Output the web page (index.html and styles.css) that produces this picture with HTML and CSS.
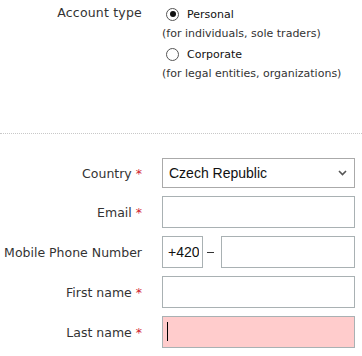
FILE: index.html
```html
<!DOCTYPE html>
<html>
<head>
<meta charset="utf-8">
<link rel="stylesheet" href="styles.css">
</head>
<body>
<div class="page">
  <section class="account">
    <div class="acc-label">Account type</div>
    <div class="options">
      <label class="opt"><input type="radio" name="acc" class="radio" checked><span>Personal</span></label>
      <div class="desc">(for individuals, sole traders)</div>
      <label class="opt"><input type="radio" name="acc" class="radio"><span>Corporate</span></label>
      <div class="desc">(for legal entities, organizations)</div>
    </div>
  </section>
  <div class="divider"></div>
  <form class="fields">
    <label class="flabel">Country <span class="req">*</span></label>
    <div class="select">
      <span class="sel-text">Czech Republic</span>
      <svg class="chev" width="9" height="6" viewBox="0 0 9 6"><path d="M1 1 L4.5 4.5 L8 1" fill="none" stroke="#555" stroke-width="1.6"/></svg>
    </div>

    <label class="flabel">Email <span class="req">*</span></label>
    <input class="inp" type="text">

    <label class="flabel">Mobile Phone Number</label>
    <div class="phone">
      <input class="inp prefix" type="text" value="+420">
      <span class="dash"></span>
      <input class="inp num" type="text">
    </div>

    <label class="flabel">First name <span class="req">*</span></label>
    <input class="inp" type="text">

    <label class="flabel">Last name <span class="req">*</span></label>
    <div class="err-wrap">
      <input class="inp err" type="text">
      <span class="caret"></span>
    </div>
  </form>
</div>
</body>
</html>
```
FILE: styles.css
```css
html, body {
  margin: 0;
  padding: 0;
  background: #fff;
}
.page {
  width: 362px;
  font-family: "DejaVu Sans", Verdana, sans-serif;
  color: #333;
}
.account {
  display: grid;
  grid-template-columns: 142px minmax(0, 1fr);
  column-gap: 20px;
  padding-top: 4px;
}
.acc-label {
  text-align: right;
  font-size: 12.5px;
  line-height: 18px;
  letter-spacing: 0.2px;
  color: #333;
}
.options {
  display: flex;
  flex-direction: column;
}
.opt {
  display: flex;
  align-items: center;
  height: 20px;
  font-size: 11px;
  color: #111;
}
.radio {
  appearance: none;
  -webkit-appearance: none;
  width: 13px;
  height: 13px;
  margin: 0 8px 0 4px;
  border: 1px solid #555;
  border-radius: 50%;
  background: #fff;
  box-sizing: border-box;
  position: relative;
}
.radio:checked::after {
  content: "";
  position: absolute;
  left: 2.5px;
  top: 2.5px;
  width: 6px;
  height: 6px;
  border-radius: 50%;
  background: #111;
}
.desc {
  height: 20px;
  line-height: 20px;
  font-size: 11px;
  color: #333;
}
.divider {
  margin-top: 49px;
  border-top: 1px dotted #c8c8c8;
}
.fields {
  display: grid;
  grid-template-columns: 142px minmax(0, 1fr);
  grid-template-rows: 30px 32px 32px 32px 32px;
  column-gap: 20px;
  row-gap: 8px;
  margin: 24px 7px 0 0;
}
.flabel {
  align-self: center;
  justify-self: end;
  font-size: 12.5px;
  color: #333;
  white-space: nowrap;
}
.req {
  color: #d0232f;
}
.inp, .select {
  box-sizing: border-box;
  height: 100%;
  width: 100%;
  min-width: 0;
  border: 1px solid #a9b1b3;
  background: #fff;
  font-family: "Liberation Sans", Arial, sans-serif;
  font-size: 14px;
  color: #111;
  padding: 0 6px;
  margin: 0;
  outline: none;
  border-radius: 0;
}
.select {
  display: flex;
  align-items: center;
  justify-content: space-between;
  border-color: #aaa;
  padding: 0 7px 0 6px;
}
.sel-text {
  color: #111;
}
.chev {
  display: block;
}
.phone {
  display: flex;
  align-items: center;
  min-width: 0;
}
.prefix {
  width: 41px;
  flex: none;
  padding: 0 3px 0 5px;
}
.dash {
  width: 7px;
  height: 1px;
  background: #333;
  margin: 0 7px 0 4px;
  flex: none;
}
.num {
  flex: 1 1 0;
  width: 0;
}
.err-wrap {
  position: relative;
  min-width: 0;
}
.err {
  background: #ffcccc;
}
.caret {
  position: absolute;
  left: 5px;
  top: 6px;
  width: 1px;
  height: 19px;
  background: #000;
}
```
